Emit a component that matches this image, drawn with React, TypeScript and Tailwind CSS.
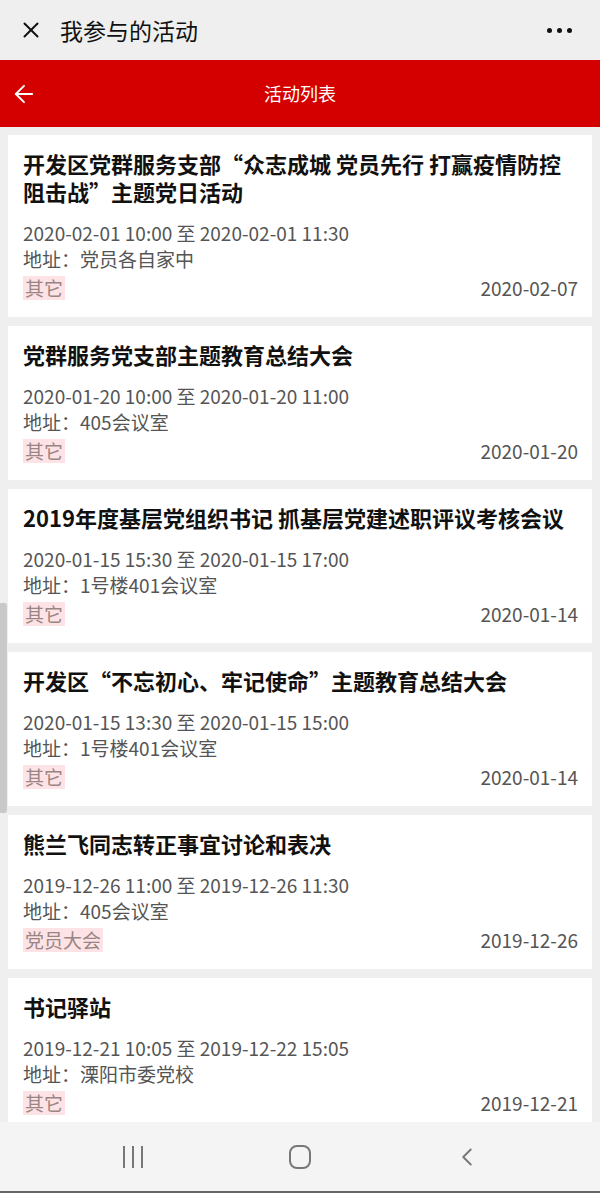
import { X, ArrowLeft, ChevronLeft } from "lucide-react";

type Activity = {
  title: string;
  time: string;
  place: string;
  tag: string;
  date: string;
};

const activities: Activity[] = [
  {
    title: "开发区党群服务支部“众志成城 党员先行 打赢疫情防控阻击战”主题党日活动",
    time: "2020-02-01 10:00 至 2020-02-01 11:30",
    place: "党员各自家中",
    tag: "其它",
    date: "2020-02-07",
  },
  {
    title: "党群服务党支部主题教育总结大会",
    time: "2020-01-20 10:00 至 2020-01-20 11:00",
    place: "405会议室",
    tag: "其它",
    date: "2020-01-20",
  },
  {
    title: "2019年度基层党组织书记 抓基层党建述职评议考核会议",
    time: "2020-01-15 15:30 至 2020-01-15 17:00",
    place: "1号楼401会议室",
    tag: "其它",
    date: "2020-01-14",
  },
  {
    title: "开发区“不忘初心、牢记使命”主题教育总结大会",
    time: "2020-01-15 13:30 至 2020-01-15 15:00",
    place: "1号楼401会议室",
    tag: "其它",
    date: "2020-01-14",
  },
  {
    title: "熊兰飞同志转正事宜讨论和表决",
    time: "2019-12-26 11:00 至 2019-12-26 11:30",
    place: "405会议室",
    tag: "党员大会",
    date: "2019-12-26",
  },
  {
    title: "书记驿站",
    time: "2019-12-21 10:05 至 2019-12-22 15:05",
    place: "溧阳市委党校",
    tag: "其它",
    date: "2019-12-21",
  },
];

const Card = ({ item }: { item: Activity }) => {
  return (
    <div className="bg-white px-[15px] pt-[14px] pb-[17px] shrink-0">
      <div className="text-[22px] leading-[28px] font-bold text-[#111] pr-[10px]">{item.title}</div>
      <div className="mt-[15px] text-[19px] leading-[26px] text-[#555]">{item.time}</div>
      <div className="text-[19px] leading-[26px] text-[#555]">地址：{item.place}</div>
      <div className="mt-[4px] flex items-center justify-between">
        <span className="bg-[#fde3e6] text-[#9a8585] text-[19px] leading-[24px] px-[2px]">{item.tag}</span>
        <span className="text-[19px] leading-[24px] text-[#555] mr-[-1px]">{item.date}</span>
      </div>
    </div>
  );
};

export default function App() {
  return (
    <div
      className="relative h-[1193px] w-[600px] flex flex-col overflow-hidden bg-[#efefef]"
      style={{ fontFamily: '"Noto Sans CJK SC", "Noto Sans", sans-serif' }}
    >
      {/* wechat title bar */}
      <div className="h-[60px] shrink-0 flex items-center bg-[#efefef] pl-[18px] pr-[28px]">
        <X className="w-[26px] h-[26px] text-[#111]" strokeWidth={1.8} />
        <span className="ml-[16px] text-[23px] text-[#111]">我参与的活动</span>
        <div className="ml-auto flex gap-[5px]">
          <span className="w-[5px] h-[5px] rounded-full bg-[#111]" />
          <span className="w-[5px] h-[5px] rounded-full bg-[#111]" />
          <span className="w-[5px] h-[5px] rounded-full bg-[#111]" />
        </div>
      </div>

      {/* red header */}
      <div className="h-[67px] shrink-0 bg-[#d40000] flex items-center px-[10px]">
        <ArrowLeft className="w-[28px] h-[28px] text-white" strokeWidth={1.6} />
        <span className="flex-1 text-center text-[18px] text-white mr-[28px]">活动列表</span>
      </div>

      {/* list */}
      <div className="flex-1 overflow-hidden flex flex-col gap-[9px] px-[8px] pt-[8px]">
        {activities.map((a, i) => (
          <Card key={i} item={a} />
        ))}
      </div>

      {/* system nav */}
      <div className="h-[71px] shrink-0 bg-[#f4f4f4] flex items-center justify-center gap-[127px] border-b-[2px] border-[#666]">
        <div className="w-[40px] flex justify-center gap-[7px]">
          <span className="w-[2px] h-[22px] bg-[#777]" />
          <span className="w-[2px] h-[22px] bg-[#777]" />
          <span className="w-[2px] h-[22px] bg-[#777]" />
        </div>
        <div className="w-[40px] flex justify-center">
          <span className="w-[22px] h-[24px] rounded-[8px] border-[2px] border-[#777]" />
        </div>
        <div className="w-[40px] flex justify-center">
          <ChevronLeft className="w-[30px] h-[30px] text-[#777]" strokeWidth={1.5} />
        </div>
      </div>

      {/* side scroll handle artifact */}
      <div className="absolute left-0 top-[603px] w-[7px] h-[210px] bg-[#c9c9c9] rounded-r-[3px]" />
    </div>
  );
}
